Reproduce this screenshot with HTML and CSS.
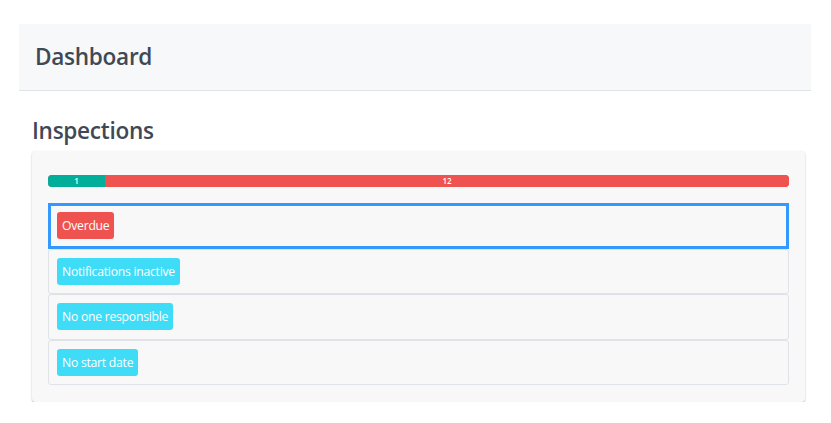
FILE: index.html
```html
<!DOCTYPE html>
<html>
<head>
<meta charset="utf-8">
<link rel="stylesheet" href="styles.css">
</head>
<body>
<div class="page">
  <header class="topbar"><h1 class="title">Dashboard</h1></header>
  <section class="section">
    <h2 class="section-title">Inspections</h2>
    <div class="card">
      <div class="progress">
        <div class="bar bar-ok" style="width:57px">1</div>
        <div class="bar bar-bad">12</div>
      </div>
      <ul class="list">
        <li class="item active"><span class="badge badge-red">Overdue</span></li>
        <li class="item"><span class="badge badge-cyan">Notifications inactive</span></li>
        <li class="item"><span class="badge badge-cyan">No one responsible</span></li>
        <li class="item"><span class="badge badge-cyan">No start date</span></li>
      </ul>
    </div>
  </section>
</div>
</body>
</html>
```
FILE: styles.css
```css
* { box-sizing: border-box; }
html, body { margin: 0; padding: 0; background: #fff; }
body { font-family: "Open Sans", "Noto Sans", sans-serif; color: #3f4956; }
.page { padding: 24px 20px 0 19px; }
.topbar {
  background: #f7f8fa;
  border-bottom: 1px solid #dfe2e6;
  height: 67px;
  display: flex;
  align-items: center;
  padding-left: 16px;
  padding-bottom: 2px;
}
.title { margin: 0; font-size: 22.6px; font-weight: 600; color: #3f4956; letter-spacing: -0.3px; }
.section { padding: 0 6px 0 13px; }
.section-title { margin: 25px 0 0 0; font-size: 22.6px; font-weight: 600; color: #3f4956; line-height: 30px; letter-spacing: -0.3px; }
.card {
  margin-top: 5px;
  background: #f8f8f8;
  border-radius: 4px;
  box-shadow: 0 1px 2px rgba(0,0,0,0.28);
  padding: 24px 16px 17px 16px;
}
.progress {
  display: flex;
  height: 12px;
  border-radius: 4px;
  overflow: hidden;
  background: #ef5350;
}
.bar { color: #fff; font-size: 8px; line-height: 12px; text-align: center; font-weight: 600; }
.bar-ok { background: #00ae9a; }
.bar-bad { background: #ef5350; flex: 1; }
.list { list-style: none; margin: 16px 0 0 0; padding: 0; }
.item {
  border: 1px solid #dfe2e6;
  border-radius: 3px;
  height: 45.5px;
  display: flex;
  align-items: center;
  padding-left: 8px;
  background: #f8f8f8;
}
.item.active { border: 3px solid #3399ff; border-radius: 0; padding-left: 6px; }
.badge {
  color: #fff;
  font-size: 12.2px;
  line-height: 27px;
  padding: 0 5px;
  border-radius: 3px;
  letter-spacing: -0.25px;
}
.badge-red { background: #ef5350; }
.badge-cyan { background: #3fdcf7; }
```
